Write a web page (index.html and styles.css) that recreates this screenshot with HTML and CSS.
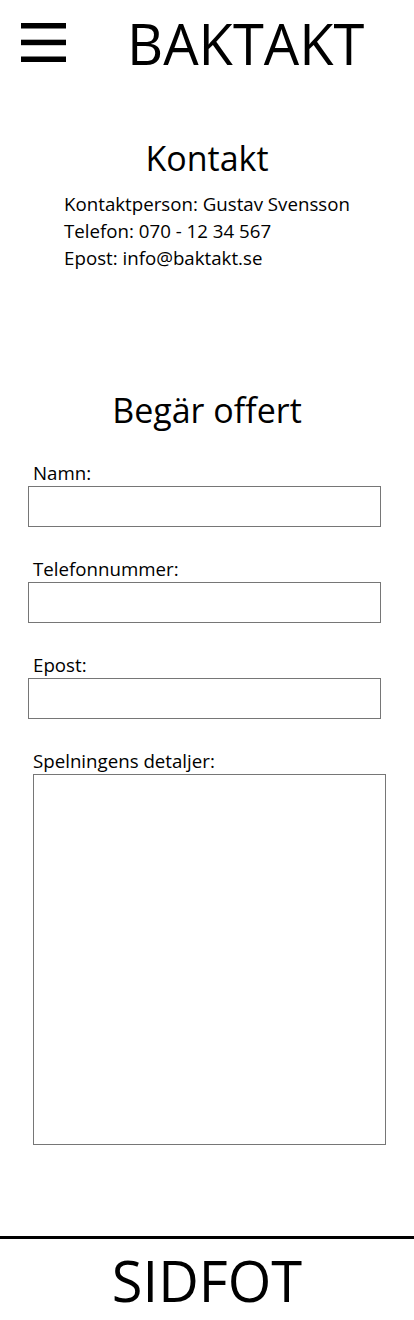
FILE: index.html
```html
<!DOCTYPE html>
<html lang="sv">
<head>
<meta charset="utf-8">
<title>Baktakt - Kontakt</title>
<link rel="stylesheet" href="styles.css">
</head>
<body>
<header class="site-header">
  <svg class="menu-icon" width="45" height="39" viewBox="0 0 45 39" aria-label="Meny">
    <rect x="0" y="0" width="45" height="5.5" fill="#000"/>
    <rect x="0" y="16.7" width="45" height="5.5" fill="#000"/>
    <rect x="0" y="33.5" width="45" height="5.5" fill="#000"/>
  </svg>
  <div class="logo">BAKTAKT</div>
</header>
<main>
  <section class="contact">
    <h2 class="heading">Kontakt</h2>
    <div class="contact-info">
      <p>Kontaktperson: Gustav Svensson</p>
      <p>Telefon: 070 - 12 34 567</p>
      <p>Epost: info@baktakt.se</p>
    </div>
  </section>
  <section class="quote">
    <h2 class="heading">Begär offert</h2>
    <form class="quote-form">
      <label class="field-label" for="namn">Namn:</label>
      <input class="field-input" id="namn" type="text">
      <label class="field-label" for="tel">Telefonnummer:</label>
      <input class="field-input" id="tel" type="text">
      <label class="field-label" for="epost">Epost:</label>
      <input class="field-input" id="epost" type="text">
      <label class="field-label" for="detaljer">Spelningens detaljer:</label>
      <textarea class="field-textarea" id="detaljer"></textarea>
    </form>
  </section>
</main>
<footer class="site-footer">
  <div class="footer-text">SIDFOT</div>
</footer>
</body>
</html>
```
FILE: styles.css
```css
* { box-sizing: border-box; }
html, body {
  margin: 0;
  padding: 0;
  background: #fff;
  color: #000;
  font-family: "Open Sans", "Noto Sans", sans-serif;
}
.site-header {
  display: flex;
  align-items: flex-start;
  padding: 23px 21px 0 21px;
  height: 90px;
}
.menu-icon { flex: none; display: block; }
.logo {
  margin-left: 61px;
  margin-top: -20px;
  font-size: 56px;
  line-height: 80px;
  font-weight: 400;
}
.contact {
  display: flex;
  flex-direction: column;
  align-items: center;
  margin-top: 46px;
}
.heading {
  margin: 0;
  font-size: 34px;
  font-weight: 400;
  line-height: 44px;
  text-align: center;
}
.contact-info {
  margin-top: 10px;
}
.contact-info p {
  margin: 0;
  font-size: 18.7px;
  line-height: 27px;
}
.quote {
  margin-top: 117px;
}
.quote-form {
  display: flex;
  flex-direction: column;
  padding: 28px 28px 0 28px;
}
.field-label {
  font-size: 18.7px;
  line-height: 26px;
  margin-left: 5px;
}
.field-input {
  width: 353px;
  height: 41px;
  border: 1px solid #767676;
  margin: 0 0 29px 0;
  font: inherit;
}
.field-textarea {
  width: 353px;
  height: 371px;
  border: 1px solid #767676;
  margin: 0 0 0 5px;
  resize: none;
  font: inherit;
}
.site-footer {
  margin-top: 91px;
  border-top: 3.5px solid #000;
  text-align: center;
}
.footer-text {
  font-size: 56px;
  line-height: 82px;
}
```
